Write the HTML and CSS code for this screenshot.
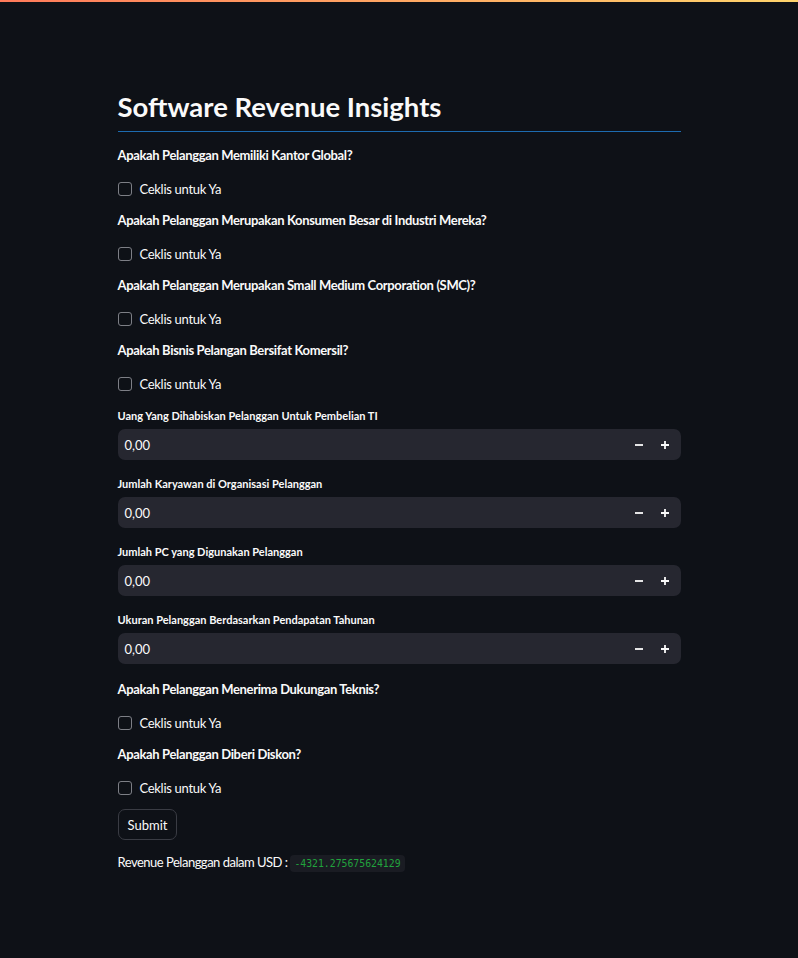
FILE: index.html
```html
<!DOCTYPE html>
<html lang="id">
<head>
<meta charset="utf-8">
<title>Software Revenue Insights</title>
<link rel="stylesheet" href="styles.css">
</head>
<body>
<div class="decoration"></div>
<main class="main">
  <h1 class="title">Software Revenue Insights</h1>
  <hr class="divider">

  <div class="field q">
    <p class="q-label">Apakah Pelanggan Memiliki Kantor Global?</p>
    <label class="check"><span class="box"></span><span>Ceklis untuk Ya</span></label>
  </div>
  <div class="field q">
    <p class="q-label">Apakah Pelanggan Merupakan Konsumen Besar di Industri Mereka?</p>
    <label class="check"><span class="box"></span><span>Ceklis untuk Ya</span></label>
  </div>
  <div class="field q">
    <p class="q-label">Apakah Pelanggan Merupakan Small Medium Corporation (SMC)?</p>
    <label class="check"><span class="box"></span><span>Ceklis untuk Ya</span></label>
  </div>
  <div class="field q">
    <p class="q-label">Apakah Bisnis Pelangan Bersifat Komersil?</p>
    <label class="check"><span class="box"></span><span>Ceklis untuk Ya</span></label>
  </div>

  <div class="field num">
    <p class="n-label">Uang Yang Dihabiskan Pelanggan Untuk Pembelian TI</p>
    <div class="input">
      <span class="value">0,00</span>
      <span class="step"><svg width="8" height="8" viewBox="0 0 8 8"><path d="M0 4h8" stroke="#fafafa" stroke-width="1.8"/></svg></span>
      <span class="step"><svg width="8" height="8" viewBox="0 0 8 8"><path d="M0 4h8M4 0v8" stroke="#fafafa" stroke-width="1.8"/></svg></span>
    </div>
  </div>
  <div class="field num">
    <p class="n-label">Jumlah Karyawan di Organisasi Pelanggan</p>
    <div class="input">
      <span class="value">0,00</span>
      <span class="step"><svg width="8" height="8" viewBox="0 0 8 8"><path d="M0 4h8" stroke="#fafafa" stroke-width="1.8"/></svg></span>
      <span class="step"><svg width="8" height="8" viewBox="0 0 8 8"><path d="M0 4h8M4 0v8" stroke="#fafafa" stroke-width="1.8"/></svg></span>
    </div>
  </div>
  <div class="field num">
    <p class="n-label">Jumlah PC yang Digunakan Pelanggan</p>
    <div class="input">
      <span class="value">0,00</span>
      <span class="step"><svg width="8" height="8" viewBox="0 0 8 8"><path d="M0 4h8" stroke="#fafafa" stroke-width="1.8"/></svg></span>
      <span class="step"><svg width="8" height="8" viewBox="0 0 8 8"><path d="M0 4h8M4 0v8" stroke="#fafafa" stroke-width="1.8"/></svg></span>
    </div>
  </div>
  <div class="field num">
    <p class="n-label">Ukuran Pelanggan Berdasarkan Pendapatan Tahunan</p>
    <div class="input">
      <span class="value">0,00</span>
      <span class="step"><svg width="8" height="8" viewBox="0 0 8 8"><path d="M0 4h8" stroke="#fafafa" stroke-width="1.8"/></svg></span>
      <span class="step"><svg width="8" height="8" viewBox="0 0 8 8"><path d="M0 4h8M4 0v8" stroke="#fafafa" stroke-width="1.8"/></svg></span>
    </div>
  </div>

  <div class="field q after-num">
    <p class="q-label">Apakah Pelanggan Menerima Dukungan Teknis?</p>
    <label class="check"><span class="box"></span><span>Ceklis untuk Ya</span></label>
  </div>
  <div class="field q">
    <p class="q-label">Apakah Pelanggan Diberi Diskon?</p>
    <label class="check"><span class="box"></span><span>Ceklis untuk Ya</span></label>
  </div>

  <div class="field"><button class="btn">Submit</button></div>

  <p class="result">Revenue Pelanggan dalam USD : <code class="code">-4321.275675624129</code></p>
</main>
</body>
</html>
```

FILE: styles.css
```css
html, body {
  margin: 0;
  padding: 0;
  background: #0e1117;
  color: #fafafa;
  font-family: Lato, "Open Sans", sans-serif;
}
.decoration {
  height: 2px;
  background: linear-gradient(90deg, #ff7a5a, #ffd46c);
}
.main {
  width: 563px;
  margin: 0 auto;
  padding-top: 85px;
  display: flex;
  flex-direction: column;
}
.title {
  margin: 0;
  font-size: 27.5px;
  line-height: 40px;
  font-weight: 700;
}
.divider {
  margin: 4px 0 0;
  border: 0;
  height: 1px;
  background: #1d6bb0;
}
.field { margin-top: 11px; }
.divider + .field { margin-top: 13px; }
.q-label {
  margin: 0;
  font-size: 13px;
  line-height: 20px;
  font-weight: 700;
  letter-spacing: -0.35px;
}
.check {
  margin-top: 14px;
  display: flex;
  align-items: center;
  gap: 8px;
  font-size: 13px;
  line-height: 20px;
  letter-spacing: -0.3px;
}
.box {
  width: 12px;
  height: 12px;
  border: 1px solid #7d7f86;
  border-radius: 3px;
}
.num { margin-top: 14px; }
.num + .num { margin-top: 16px; }
.after-num { margin-top: 15px; }
.n-label {
  margin: 0;
  font-size: 11px;
  line-height: 16px;
  font-weight: 700;
}
.input {
  margin-top: 5px;
  height: 31px;
  background: #262730;
  border-radius: 7px;
  display: flex;
  align-items: center;
  padding-left: 7px;
  padding-right: 3px;
}
.value {
  flex: 1;
  font-size: 13px;
}
.step {
  width: 26px;
  height: 31px;
  display: flex;
  align-items: center;
  justify-content: center;
}
.btn {
  height: 31px;
  padding: 0 9px;
  background: #0e1117;
  color: #fafafa;
  border: 1px solid #3a3c44;
  border-radius: 7px;
  font-family: inherit;
  font-size: 13px;
}
.result {
  margin: 12px 0 0;
  font-size: 13px;
  line-height: 20px;
  letter-spacing: -0.5px;
}
.code {
  font-family: "DejaVu Sans Mono", monospace;
  font-size: 9.8px;
  letter-spacing: 0;
  color: #21a33d;
  background: #1a1c23;
  padding: 3px 4px;
  border-radius: 4px;
}
```
